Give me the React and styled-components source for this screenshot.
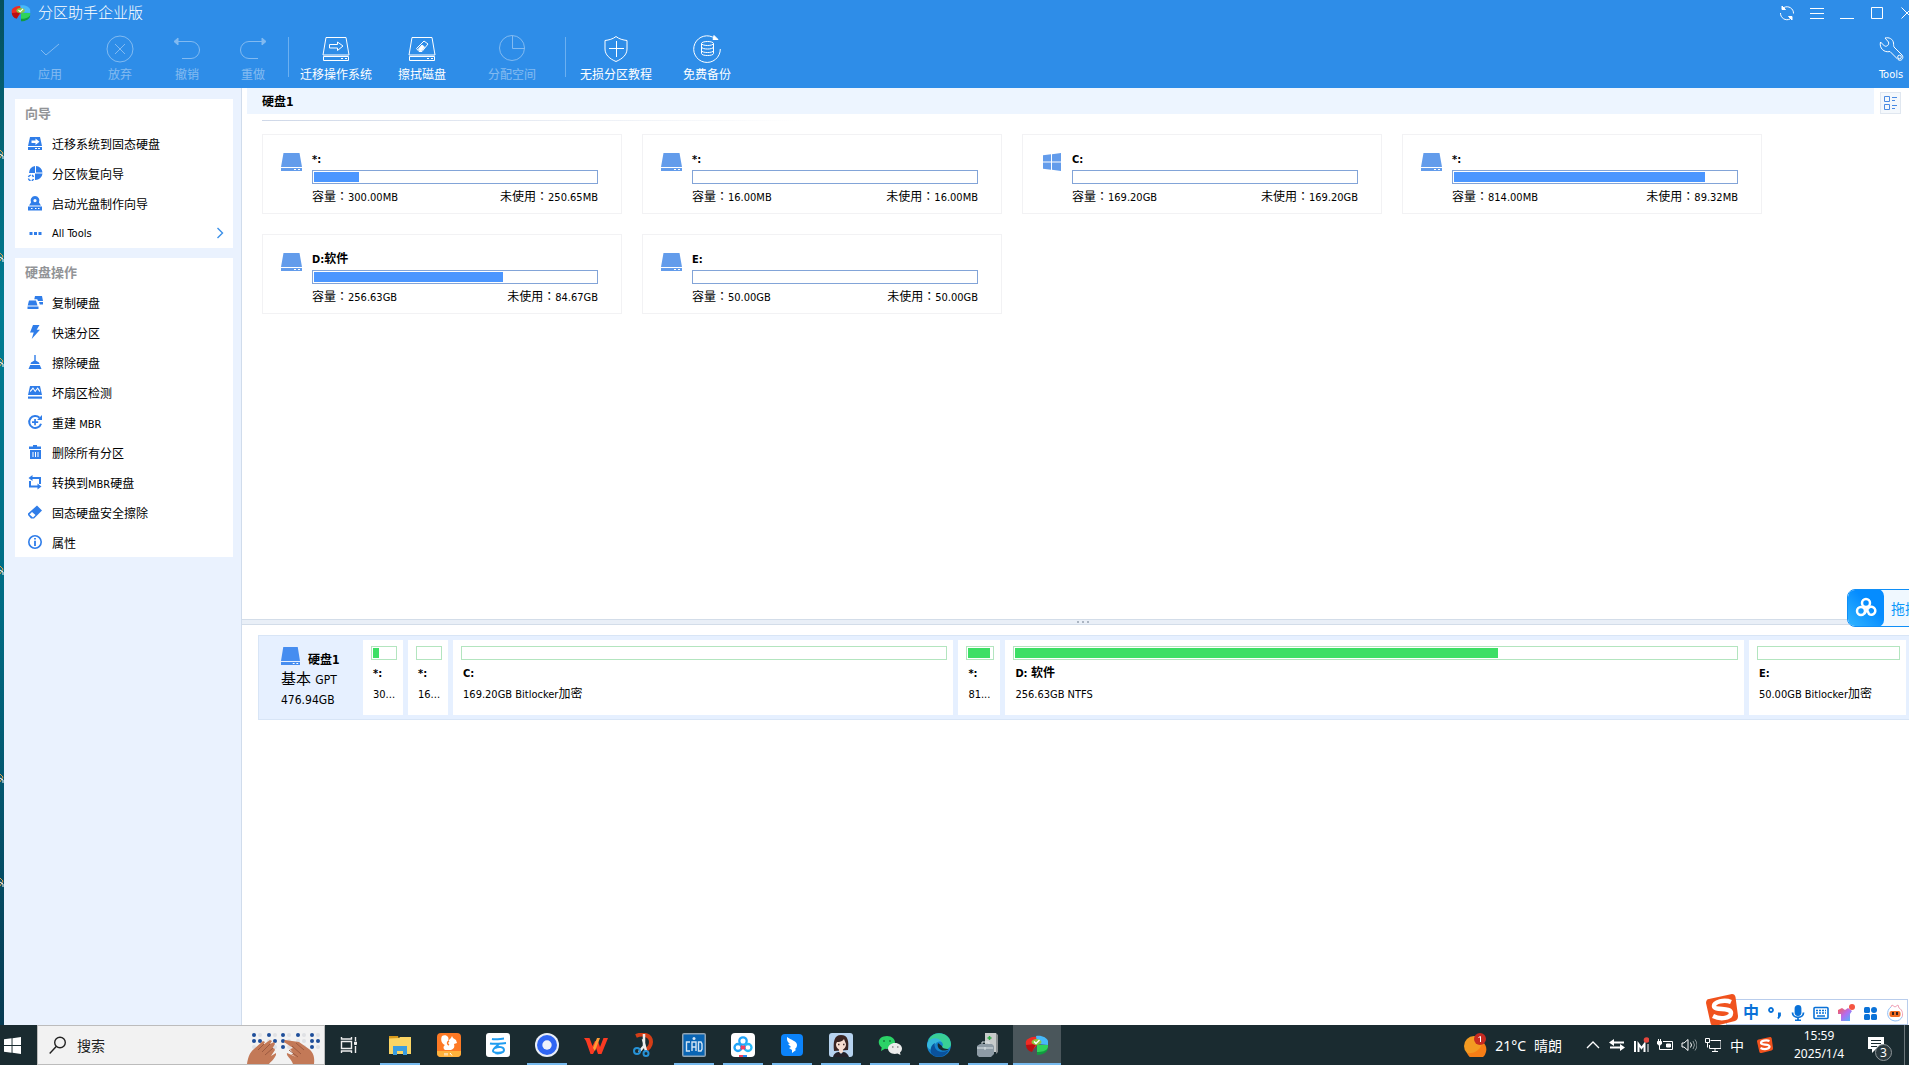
import React, { useState } from "react";
import styled, { createGlobalStyle } from "styled-components";

const GlobalStyle = createGlobalStyle`
  * {
    box-sizing: border-box;
    margin: 0;
    padding: 0;
  }
  body {
    overflow: hidden;
    background: #04566b;
    color: #000;
    font-size: 12px;
    font-family: "DejaVu Sans Condensed", "Noto Sans CJK SC", sans-serif;
  }
  button, input {
    font: inherit;
    color: inherit;
    border: none;
    background: none;
  }
  svg {
    display: block;
    flex: none;
  }
  ul {
    list-style: none;
  }
`;

const wizards = [
  { icon: "migrate", text: "迁移系统到固态硬盘" },
  { icon: "recover", text: "分区恢复向导" },
  { icon: "bootdisc", text: "启动光盘制作向导" },
  { icon: "dots", text: "All Tools", arrow: true },
];

const diskActions = [
  { icon: "copy", text: "复制硬盘" },
  { icon: "flash", text: "快速分区" },
  { icon: "broom", text: "擦除硬盘" },
  { icon: "sector", text: "坏扇区检测" },
  { icon: "rebuild", text: "重建 MBR" },
  { icon: "trash", text: "删除所有分区" },
  { icon: "convert", text: "转换到MBR硬盘" },
  { icon: "eraser", text: "固态硬盘安全擦除" },
  { icon: "info", text: "属性" },
];

const volumes = [
  { name: "*:", size: "300.00MB", free: "250.65MB", used: 16 },
  { name: "*:", size: "16.00MB", free: "16.00MB", used: 0 },
  { name: "C:", size: "169.20GB", free: "169.20GB", used: 0, system: true },
  { name: "*:", size: "814.00MB", free: "89.32MB", used: 89 },
  { name: "D:软件", size: "256.63GB", free: "84.67GB", used: 67 },
  { name: "E:", size: "50.00GB", free: "50.00GB", used: 0 },
];

const partitions = [
  { name: "*:", text: "300.00MB", used: 26, share: 40 },
  { name: "*:", text: "16.00MB", used: 0, share: 40 },
  { name: "C:", text: "169.20GB Bitlocker加密", used: 0, share: 500 },
  { name: "*:", text: "814.00MB", used: 90, share: 42 },
  { name: "D: 软件", text: "256.63GB NTFS", used: 67, share: 738 },
  { name: "E:", text: "50.00GB Bitlocker加密", used: 0, share: 157 },
];

// latin runs are set one pixel smaller than the chinese around them
const Mixed = ({ children }) =>
  children
    .split(/([\x20-\x7e]+)/)
    .filter(Boolean)
    .map((run, i) => (/^[\x20-\x7e]/.test(run) ? <Latin key={i}>{run}</Latin> : run));

const menuIcons = {
  migrate: (
    <>
      <path fill="#2f7de9" fillRule="evenodd" d="M3 2h10l2 9H1zM4.500 5.500v2.400h4v2L12.500 6.700 8.500 3.500v2z" />
      <path fill="#2f7de9" fillRule="evenodd" d="M1 12h14v3H1zm7 1v1h2v-1zm3 0v1h2v-1z" />
    </>
  ),
  recover: (
    <>
      <path fill="#2f7de9" d="M8 1v7H2a7 7 0 0 1 6-7zM9 1a7 7 0 0 1 6.500 6.500H9zM8 8.500h7.500A7 7 0 0 1 8 15z" />
      <path fill="none" stroke="#2f7de9" strokeWidth="1.400" strokeDasharray="3 1" d="M1.500 12a2.600 2.600 0 0 1 5 0M1.500 13.500a2.600 2.600 0 0 0 5 .5" />
    </>
  ),
  bootdisc: (
    <>
      <path fill="#2f7de9" fillRule="evenodd" d="M8 1a4.500 4.500 0 0 1 4 6.500l2 3H2l2-3A4.500 4.500 0 0 1 8 1zm0 3a1.600 1.600 0 1 0 0 3.200A1.600 1.600 0 0 0 8 4z" />
      <path fill="#2f7de9" fillRule="evenodd" d="M1 11.500h14v4H1zm3 1.500v1h1.500v-1zm4 0v1h1.500v-1zm3 0v1h1.500v-1z" />
    </>
  ),
  dots: <path fill="#2f7de9" d="M2.500 7h3v3h-3zM7 7h3v3H7zM11.500 7h3v3h-3z" />,
  copy: (
    <>
      <path fill="#2f7de9" d="M2 6.500h7l1.500 5H.7zM.5 12.500h11V15H.5z" />
      <path fill="#2f7de9" d="M8 2h7l1 5h-5l-.8-1.700H7.300zM12 8h4v2.500h-3.200z" />
    </>
  ),
  flash: <path fill="#2f7de9" d="M6 1h6.500L9.700 5.700H13L4.700 15l2-6.500H3z" />,
  broom: <path fill="#2f7de9" d="M7.300 1h1.400v5.500L12 8.500l.5 1.500h-9L4 8.500l3.300-2zM3.200 11h9.600l1.700 4H1.500z" />,
  sector: (
    <>
      <path fill="#2f7de9" fillRule="evenodd" d="M3 2h10l2 9H1zM3.500 8 6 5l2.200 3.200L10.500 5 12.500 8l.8-1-2.600-3.800-2.500 3.200L6 3.200 2.800 7z" />
      <path fill="#2f7de9" d="M1 12.500h14v2.200H1z" />
    </>
  ),
  rebuild: (
    <>
      <path fill="none" stroke="#2f7de9" strokeWidth="2" d="M12.500 3.700a6 6 0 1 0 1.500 6" />
      <path fill="#2f7de9" d="M15 1v5h-5zM7.200 5h1.700v2.200h2.300v1.700H8.900v2.300H7.200V8.900H5V7.200h2.200z" />
    </>
  ),
  trash: (
    <path fill="#2f7de9" fillRule="evenodd" d="M6 1h4v1.500h4V5H2V2.500h4zM3 6h11v9H3zm2.500 2v5h1V8zm2.500 0v5h1V8zm2.500 0v5h1V8z" />
  ),
  convert: (
    <>
      <path fill="none" stroke="#2f7de9" strokeWidth="2" d="M3 7v5.500h8M5 4h8v6" />
      <path fill="#2f7de9" d="M5.500 1v6L1.500 4zM10.500 9.500v6l4-3z" />
    </>
  ),
  eraser: (
    <path fill="#2f7de9" fillRule="evenodd" d="M10 1.500 15 6.500 7 14.500H4L1 11V9.500zM5 8 2.500 10.500 6 13.500 8.500 11z" />
  ),
  info: (
    <>
      <circle cx="8" cy="8" r="6.200" fill="none" stroke="#2f7de9" strokeWidth="1.600" />
      <path fill="#2f7de9" d="M7.100 4h1.800v1.600H7.100zM7.100 6.800h1.800V12H7.100z" />
    </>
  ),
};

const MenuIcon = ({ name }) => (
  <svg width="16" height="16" viewBox="0 0 16 16">
    {menuIcons[name]}
  </svg>
);

const toolIcons = {
  apply: <path d="m5 15 5 5L23 9" />,
  discard: (
    <>
      <circle cx="14" cy="14" r="13" />
      <path d="m9 9 10 10M19 9 9 19" />
    </>
  ),
  undo: (
    <>
      <path d="M3 6.500h15a8.500 8.500 0 0 1 0 17H9" />
      <path fill="#fff" d="M1 6.500 5 3v7z" />
    </>
  ),
  redo: (
    <>
      <path d="M25 6.500H10a8.500 8.500 0 0 0 0 17h9" />
      <path fill="#fff" d="M27 6.500 23 3v7z" />
    </>
  ),
  migrate: (
    <>
      <path d="M4 2.500h20L27 20H1zM1.500 21.500h25v4h-25zM19 23.500h2M23 23.500h2" />
      <path d="M7.500 9.500h8V7l5.500 4-5.500 4.500v-2.500h-8z" />
    </>
  ),
  wipe: (
    <>
      <path d="M4 2.500h20L27 20H1zM1.500 21.500h25v4h-25zM19 23.500h2M23 23.500h2" />
      <path d="m16 6 4 3-6 7.500H11l-2.500-3z" />
      <path fill="#fff" d="m14 10 2.500 2-3 3.500h-2L10.500 14z" />
    </>
  ),
  allocate: (
    <>
      <circle cx="14" cy="13" r="12.500" />
      <path d="M14.500 1v12.500H27" />
    </>
  ),
  guide: (
    <>
      <path d="M14 1.500C11 4 7 5 3 5.500V14c0 6 5 10 11 12.500C20 24 25 20 25 14V5.500C21 5 17 4 14 1.500z" />
      <path d="M14.500 6v16M7 13.500h15" />
    </>
  ),
  backup: (
    <>
      <path d="M22 3.500A13.300 13.300 0 1 0 27.300 14" />
      <path fill="#fff" d="m21 .5 4 4h-5z" />
      <ellipse cx="14.500" cy="8.500" rx="6" ry="2" />
      <path d="M8.500 8.500v10c0 2.700 12 2.700 12 0v-10M8.500 12c0 2.700 12 2.700 12 0M8.500 15.500c0 2.700 12 2.700 12 0" />
    </>
  ),
  tools: (
    <>
      <path d="M8 3c4-1 8 1 8.500 5 .2 2 0 3 .5 4l8 8c2.500 3-1 7-4 4.500l-8-8C7 18 2 13 3.500 7l4 4c2 1 5-1 4-4z" />
      <circle cx="22.500" cy="22" r="1.800" />
    </>
  ),
};

const Tool = ({ icon, label, width, disabled }) => (
  <ToolButton type="button" $width={width} disabled={disabled}>
    <svg width="28" height="28" viewBox="0 0 28 28" fill="none" stroke="#fff">
      {toolIcons[icon]}
    </svg>
    {label}
  </ToolButton>
);

const DriveIcon = ({ color = "#639ceb", size = 21 }) => (
  <svg width={size} height="18" viewBox="0 0 21 18" preserveAspectRatio="none">
    <path fill={color} d="M2.500 0h16L21 14H0zM0 15h21v3H0z" />
    <path fill="#fff" d="M13 16h2v1h-2zM17 16h2v1h-2z" />
  </svg>
);

const WindowsIcon = ({ color = "#639ceb", size = 18 }) => (
  <svg width={size} height={size} viewBox="0 0 18 18">
    <path fill={color} d="M0 2.300 8 1.300v7.200H0zM9 1.200 18 0v8.500H9zM0 9.500h8v7.200l-8-1zM9 9.500h9V18l-9-1.200z" />
  </svg>
);

const Sogou = ({ size }) => (
  <svg width={size} height={size} viewBox="0 0 32 32">
    <path fill="#f0521d" d="M3 5 26 0c2 0 3 1 3.500 3L32 22c0 3-1 4-3 5L9 32c-3 0-4-1-4.500-3L0 9c0-2 1-4 3-4z" />
    <path fill="none" stroke="#fff" strokeWidth="4.500" d="M25 8C18 5 8 8 8 12c0 5 17 1 17 7 0 5-10 7-18 3" />
  </svg>
);

const AomeiIcon = ({ size }) => (
  <svg width={size} height={size} viewBox="0 0 24 24">
    <path fill="#f02c24" d="M12 4v8l-5 6C2 17 0 12 1 8c2-3 7-5 11-4z" />
    <path fill="#b90f12" d="m1 12 10-1-4 8c-4-1-6-4-6-7z" />
    <path fill="#46b9fa" d="M11 3c6-1 11 2 12 5v4l-11-1z" />
    <path fill="#2fd35a" d="M23 12c1 5-5 9-11 9v-9z" />
    <path fill="#119c3f" d="M23 15c0 4-5 7-11 7v-3c5 0 9-1 11-4z" />
    <ellipse cx="11.500" cy="9" rx="5" ry="3" fill="#8dc63f" />
    <path fill="none" stroke="#fff" strokeWidth="1.400" d="m9 8.500 2 2L14.500 7" />
  </svg>
);

const appIcons = {
  explorer: (
    <>
      <path fill="#d79a1c" d="M1 3h9l1 3H1z" />
      <path fill="#fbd564" d="M1 5.500 11 5l1-1h11v17H1z" />
      <path fill="#3b9de0" d="M5 13h14v9h-4v-4H9v4H5z" />
    </>
  ),
  squirrel: (
    <>
      <rect width="24" height="24" rx="4" fill="#fd7924" />
      <path fill="#ffb23c" d="M0 18h24v2q0 4-4 4H4q-4 0-4-4z" />
      <path fill="#fff" d="M5 3c4-2 8 1 6 5l3-3 1-2 1 2 3 2 1 3-3 1c1 3 0 5-3 6H8c-2-1-2-4 0-5-3-1-5-5-3-9z" />
      <path stroke="#fd7924" strokeWidth="1.500" fill="none" d="M12 8c-2 1-2 3 0 4" />
      <path stroke="#fff" d="M8 20v2.500M10 20v2.500M13 20l2 2.500" />
    </>
  ),
  cloud: (
    <>
      <rect width="24" height="24" rx="3" fill="#fff" />
      <path fill="none" stroke="#209df0" strokeWidth="2" d="M6 6c4 1 7 0 12-.5M4 10.500c6 1 10 0 16-.5M13 11c-2 2-6 4-6 7 0 2 7 2 10 1M9 15c4-2 9-1 9 2s-6 4-9 3" />
    </>
  ),
  quark: (
    <>
      <circle cx="12" cy="12" r="12" fill="#e9eef7" />
      <circle cx="12" cy="12" r="10" fill="#2f66f5" />
      <circle cx="12" cy="12" r="4.700" fill="#eef2fa" />
    </>
  ),
  wps: (
    <>
      <path fill="#fb3a22" d="M0 5h5.500l3 8L11 8h3l2 6 3.500-9H24l-6.500 16H14l-2-6-3 6H6.500L2 8z" />
      <path fill="#ff9b35" d="M13 5h3l-5 13-2-3z" />
    </>
  ),
  snip: (
    <>
      <path fill="none" stroke="#d43e17" strokeWidth="4" d="M3 3c7-3 15-1 15 6 0 4-3 7-6 8" />
      <path stroke="#eee" strokeWidth="2.500" d="M11 1v12l-5 6M10 6l3 12" />
      <g fill="none" stroke="#2692d6" strokeWidth="2">
        <circle cx="4" cy="18" r="3" />
        <circle cx="13" cy="20.500" r="2.500" />
      </g>
    </>
  ),
  cad: (
    <>
      <rect width="24" height="24" rx="2" fill="#91a4b3" />
      <rect x="1.500" y="1.500" width="21" height="21" fill="#0965b4" />
      <path fill="none" stroke="#d3e5f4" strokeWidth="1.400" d="M8 9H4.500v9H8M10 18V9h4v9M10 14h4M16.500 9h2.500l1 2v5l-1 2h-2.500z" />
      <circle cx="12" cy="5.500" r="1.500" fill="#d3e5f4" />
    </>
  ),
  baidu: (
    <>
      <rect width="24" height="24" rx="4" fill="#fff" />
      <g fill="none" strokeWidth="2.300">
        <circle cx="12" cy="8" r="3.700" stroke="#20a5fa" />
        <circle cx="7" cy="14.500" r="3.500" stroke="#20a5fa" />
        <circle cx="17" cy="14.500" r="3.500" stroke="#26b8fa" />
        <path stroke="#f33e5f" d="m10 13 4 3M14 13l-4 3" />
      </g>
      <path fill="#f33e5f" d="M8 22h4v2H8z" />
      <path fill="#2788f5" d="M12 22h4v2h-4z" />
    </>
  ),
  dingtalk: (
    <>
      <rect x="1" y="1" width="22" height="22" rx="4" fill="#0b83fa" />
      <path fill="#fff" d="M7 4c4 3 10 4 10 8 0 2-1 3-2 4l1 1-4 3 0-3-3-2 2-1-3-3 2-.5C7 9 7 7 7 4z" />
    </>
  ),
  avatar: (
    <>
      <rect width="24" height="24" rx="3" fill="#b7d3ef" />
      <path fill="#3a2422" d="M5 18C4 9 5 2 12 2s8 6 7 15z" />
      <path fill="#f7ddd1" d="M8 9c5 0 6-2 7-3l2 5c0 4-3 6-5 6s-5-2-5-6zM10 15h4v5h-4z" />
      <path fill="#25222a" d="M4 24c1-4 4-5 6-5l2 2 2-2c3 0 5 2 6 5z" />
      <path stroke="#46302f" strokeWidth="1.400" d="M9 11.500h1.500M14 11.500h1.500" />
    </>
  ),
  wechat: (
    <>
      <path fill="#2bd367" d="M9 3c5 0 8 3 8 6.500S14 16 9 16l-2-.3L3 18l.7-3.500C-2 10 1 3 9 3z" />
      <path fill="#ececec" d="M17 10c4 0 7 2.500 7 5.500 0 2-1 3-2 4l.5 2.500-3-1.400C14 22 10 19 10 15.500c0-3 3-5.500 7-5.500z" />
      <path stroke="#18803e" strokeWidth="1.600" d="M5 8h2M11 8h2" />
      <path stroke="#8b8b8b" strokeWidth="1.400" d="M14 14h1.500M19 14h1.500" />
    </>
  ),
  edge: (
    <>
      <circle cx="12" cy="12" r="12" fill="#1583cf" />
      <path fill="#39cf96" d="M1 9C3-3 23-3 24 11c0 4-4 6-8 5-2-.5-1-2 0-4C16 7 6 4 1 9z" />
      <path fill="#36b7dc" d="M0 12C1 4 12 3 15 9c-5-2-9 3-8 8-4 0-7-2-7-5z" />
      <path fill="#0a529d" d="M8 10c-2 6 4 12 14 7-4 8-14 9-18 3-1-4 0-8 4-10z" />
      <path fill="#192a2e" d="M11 10c-2 6 5 10 11 6-5 0-7-1-7-3z" />
    </>
  ),
  server: (
    <>
      <path fill="#c7cbcb" d="M9 0h11v19H9z" />
      <path fill="#898f91" d="m20 0 2 2v17l-2 2z" />
      <path stroke="#2bab43" strokeWidth="1.500" d="M11.500 5h4M13.500 3v4" />
      <path fill="#8d9ba5" d="m1 13 3-2h12l2 2v8L15 24H3l-2-2z" />
      <path fill="none" stroke="#dde5e8" d="M6 11V9h7v2M1 15h16M9 14v3" />
    </>
  ),
};

const apps = [
  { name: "explorer", open: true },
  { name: "squirrel" },
  { name: "cloud" },
  { name: "quark", open: true },
  { name: "wps" },
  { name: "snip" },
  { name: "cad", open: true },
  { name: "baidu", open: true },
  { name: "dingtalk", open: true },
  { name: "avatar", open: true },
  { name: "wechat", open: true },
  { name: "edge", open: true },
  { name: "server", open: true },
];

const trayIcons = [
  <g key="sync">
    <path strokeWidth="2" d="M2 5.500h13M1 10.500h13" />
    <path fill="#fff" stroke="none" d="M5 2v7L0 5.500zM11 7v7l5-3.500z" />
  </g>,
  <g key="mm">
    <path strokeWidth="2" d="M2 4v11M5.500 15V7l3 4 3-4v8" />
    <circle cx="13.500" cy="3" r="2.800" fill="#e4463c" stroke="none" />
    <path d="M15 7v8" />
  </g>,
  <g key="battery">
    <path d="M6 4.500h9.500v8H4" />
    <path fill="#fff" d="M9.500 7h4v3h-4zM.5 4.500h4V7l-2 1.500-2-1.500z" />
    <path d="M1.500 2v2M3.500 2v2M2.500 8v4.500H5" />
  </g>,
  <g key="volume">
    <path d="M1 6v4h2l4 3.500V2.500L3 6zM9.500 5.500q2 2.500 0 5" />
    <path opacity="0.500" d="M12 4q3 4 0 8M14 2.500q4 5.500 0 11" />
  </g>,
  <path key="network" d="M5.500 3.500H16v8H4.500V8M7 14.500h6M10 11.500v3M.5 1.500h4v4h-4zM2.500 5.500v5" />,
];

const SideCard = ({ title, items }) => (
  <StyledSideCard>
    <h2>{title}</h2>
    <ul>
      {items.map((item) => (
        <li key={item.text}>
          <SideItem type="button">
            <MenuIcon name={item.icon} />
            <span>
              <Mixed>{item.text}</Mixed>
            </span>
            {item.arrow && (
              <svg width="8" height="12" viewBox="0 0 8 12" fill="none" stroke="#3c90e8" strokeWidth="1.400">
                <path d="m1.500 1 5 5-5 5" />
              </svg>
            )}
          </SideItem>
        </li>
      ))}
    </ul>
  </StyledSideCard>
);

const VolumeCard = ({ volume }) => (
  <StyledVolume>
    <VolumeIcon>{volume.system ? <WindowsIcon /> : <DriveIcon />}</VolumeIcon>
    <VolumeBody>
      <h3>
        <Mixed>{volume.name}</Mixed>
      </h3>
      <Bar $border="#82a4d8" $fill="#4b96ff">
        <div style={{ width: `${volume.used}%` }} />
      </Bar>
      <VolumeInfo>
        <span>
          <Mixed>{`容量：${volume.size}`}</Mixed>
        </span>
        <span>
          <Mixed>{`未使用：${volume.free}`}</Mixed>
        </span>
      </VolumeInfo>
    </VolumeBody>
  </StyledVolume>
);

const App = () => {
  const [search, setSearch] = useState("");

  return (
    <>
      <GlobalStyle />
      <Screen>
        <Desktop>
          <DesktopEdge>
            <svg width="4" height="900" viewBox="0 0 4 900" fill="none">
              {[154, 257, 362, 570, 778, 882].map((y) => (
                <g key={y}>
                  <path stroke="#e0a050" d={`M0 ${y - 4}l3 3-3 5`} />
                  <path stroke="#fff" d={`M0 ${y}l3 2v3`} />
                </g>
              ))}
            </svg>
          </DesktopEdge>
          <Window>
            <Header>
              <TitleBar>
                <AomeiIcon size={20} />
                <h1>分区助手企业版</h1>
                <WindowButtons>
                  <button type="button" aria-label="刷新">
                    <svg width="16" height="16" viewBox="0 0 16 16" fill="none" stroke="#fff">
                      <path d="M5 2.500a6.500 6.500 0 0 1 9.500 6M11 14a6.500 6.500 0 0 1-9.500-6" />
                      <path fill="#fff" d="M3 1v3.500h3.500zM13 15v-3.500H9.500z" />
                    </svg>
                  </button>
                  <button type="button" aria-label="菜单">
                    <svg width="14" height="14" viewBox="0 0 14 14" stroke="#fff">
                      <path d="M0 2.500h14M0 7.500h14M0 12.500h14" />
                    </svg>
                  </button>
                  <button type="button" aria-label="最小化">
                    <svg width="14" height="14" viewBox="0 0 14 14" stroke="#fff">
                      <path d="M0 12.500h14" />
                    </svg>
                  </button>
                  <button type="button" aria-label="最大化">
                    <svg width="14" height="14" viewBox="0 0 14 14" stroke="#fff" fill="none">
                      <path d="M1.500 1.500h11v11h-11z" />
                    </svg>
                  </button>
                  <button type="button" aria-label="关闭">
                    <svg width="12" height="12" viewBox="0 0 12 12" stroke="#fff">
                      <path d="m.5.5 11 11M11.500.5l-11 11" />
                    </svg>
                  </button>
                </WindowButtons>
              </TitleBar>
              <Toolbar>
                <Tool icon="apply" label="应用" width={72} disabled />
                <Tool icon="discard" label="放弃" width={68} disabled />
                <Tool icon="undo" label="撤销" width={66} disabled />
                <Tool icon="redo" label="重做" width={66} disabled />
                <Separator />
                <Tool icon="migrate" label="迁移操作系统" width={94} />
                <Tool icon="wipe" label="擦拭磁盘" width={78} />
                <Tool icon="allocate" label="分配空间" width={102} disabled />
                <Separator />
                <Tool icon="guide" label="无损分区教程" width={100} />
                <Tool icon="backup" label="免费备份" width={82} />
                <Spacer />
                <Tool icon="tools" label={<Latin>Tools</Latin>} width={36} />
              </Toolbar>
            </Header>
            <Body>
              <Sidebar>
                <SideCard title="向导" items={wizards} />
                <SideCard title="硬盘操作" items={diskActions} />
              </Sidebar>
              <Main>
                <DiskHeading>
                  <h2>硬盘1</h2>
                  <ViewButton type="button" aria-label="视图">
                    <svg width="14" height="14" viewBox="0 0 14 14" fill="none" stroke="#4a8ae2">
                      <path d="M.5.5h5v5h-5zM.5 8.500h5v5h-5zM8 1.500h5M8 4.500h3M8 9.500h5M8 12.500h3" />
                    </svg>
                  </ViewButton>
                </DiskHeading>
                <VolumeArea>
                  <Rule />
                  <VolumeGrid>
                    {volumes.map((volume, i) => (
                      <VolumeCard volume={volume} key={i} />
                    ))}
                  </VolumeGrid>
                </VolumeArea>
                <Splitter>
                  <i />
                  <i />
                  <i />
                </Splitter>
                <DiskMap>
                  <DiskRow>
                    <DiskLabel>
                      <div>
                        <DriveIcon color="#468df0" size={19} />
                        <h3>硬盘1</h3>
                      </div>
                      <p>
                        基本 <small>GPT</small>
                      </p>
                      <p>
                        <small>476.94GB</small>
                      </p>
                    </DiskLabel>
                    {partitions.map((part, i) => (
                      <Partition key={i}>
                        <Bar $border="#b3e5bf" $fill="#3cdf65">
                          <div style={{ width: `${part.used}%` }} />
                        </Bar>
                        <h4>
                          <Mixed>{part.name}</Mixed>
                        </h4>
                        <p>
                          {part.share < 50 ? <Latin>{part.text.slice(0, 2)}...</Latin> : <Mixed>{part.text}</Mixed>}
                        </p>
                      </Partition>
                    ))}
                  </DiskRow>
                </DiskMap>
              </Main>
            </Body>
          </Window>
          <DropBox type="button">
            <DropIcon>
              <svg width="22" height="22" viewBox="0 0 22 22" fill="none" stroke="#fff" strokeWidth="2.500">
                <circle cx="11" cy="6" r="4" />
                <circle cx="6" cy="14" r="4" />
                <path d="M11 10.500 14 17a4 4 0 1 0-1-5.500L9 17" />
              </svg>
            </DropIcon>
            <span>拖拽</span>
          </DropBox>
          <ImeBar>
            <ImeLogo>
              <Sogou size={32} />
            </ImeLogo>
            <ImeText>中</ImeText>
            <svg width="16" height="16" viewBox="0 0 16 16" fill="none" stroke="#0a72d8" strokeWidth="1.800">
              <circle cx="4" cy="5" r="2" />
              <path fill="#0a72d8" d="M11 8.500h2v2l-2 3" />
            </svg>
            <svg width="16" height="16" viewBox="0 0 16 16" fill="none" stroke="#0a72d8" strokeWidth="1.800">
              <rect x="5.500" y="1" width="5" height="9" rx="2.500" fill="#0a72d8" />
              <path d="M2.500 7.500c0 6.500 11 6.500 11 0M8 12v4M5 15.500h6" />
            </svg>
            <svg width="16" height="16" viewBox="0 0 16 16" fill="none" stroke="#0a72d8">
              <rect x="1" y="2.500" width="14" height="11" rx="1" strokeWidth="1.600" />
              <path strokeWidth="1.500" strokeDasharray="2 1" d="M3 5.500h10M3 8h10" />
              <path strokeWidth="1.500" d="M4 11h8" />
            </svg>
            <svg width="18" height="18" viewBox="0 0 18 18">
              <defs>
                <linearGradient id="shirt" x1="0" y1="0" x2="1" y2="1">
                  <stop offset="0" stopColor="#fc5b50" />
                  <stop offset="0.500" stopColor="#b36df0" />
                  <stop offset="1" stopColor="#3dc0fb" />
                </linearGradient>
              </defs>
              <path fill="url(#shirt)" d="m5 4 3 2 3-2 4 3-2 3v7H4v-7H1V6z" />
              <circle cx="15" cy="3" r="3" fill="#f55541" />
            </svg>
            <svg width="16" height="16" viewBox="0 0 16 16" fill="#0a72d8">
              <rect x="2" y="2" width="6" height="6" rx="1.500" />
              <circle cx="12" cy="5" r="3" />
              <rect x="2" y="9" width="6" height="6" rx="1.500" />
              <rect x="9" y="9" width="6" height="6" rx="1.500" />
            </svg>
            <svg width="18" height="18" viewBox="0 0 18 18">
              <path fill="#fff" stroke="#f0a2b8" d="M5 3 6 1l3 2 3-2 1 3c4 2 4 7 3 9" />
              <path fill="none" stroke="#8fbef5" d="M5 3C0 6 0 16 9 17c4 0 6-2 7-4" />
              <rect x="3.500" y="7" width="11" height="6" rx="2" fill="#f06b20" />
              <path fill="#3a211b" d="M6 8h2v3H6zM10 8h2v3h-2z" />
            </svg>
          </ImeBar>
        </Desktop>
        <Taskbar>
          <StartButton type="button" aria-label="开始">
            <WindowsIcon color="#fff" size={17} />
          </StartButton>
          <SearchBox>
            <svg width="18" height="18" viewBox="0 0 18 18" fill="none" stroke="#222" strokeWidth="1.400">
              <circle cx="11" cy="6.500" r="5.300" />
              <path d="m7.200 10.500-6.500 7" />
            </svg>
            <input aria-label="搜索" placeholder="搜索" value={search} onChange={(e) => setSearch(e.target.value)} />
            <svg width="76" height="38" viewBox="0 0 76 38">
              {[8, 23, 37, 52, 66].map((x, i) => (
                <g key={x} fill="#dfe1e4">
                  <circle cx={x} cy="9" r="2" fill="#1e4e9a" />
                  <circle cx={x + 6} cy="9" r="2" />
                  <circle cx={x} cy="15" r="2" fill={i % 2 ? "#dfe1e4" : "#1e4e9a"} />
                  <circle cx={x + 6} cy="15" r="2" fill={i < 2 || i > 3 ? "#1e4e9a" : "#dfe1e4"} />
                  <circle cx={x} cy="21" r="2" fill={i > 1 ? "#1e4e9a" : "#dfe1e4"} />
                  <circle cx={x + 6} cy="21" r="2" />
                </g>
              ))}
              <path fill="#c37957" d="M1 38c1-7 3-12 7-15l9-8 2 1-2 3 7-5 2 1-2 3 4-2 1 2-3 5 2-1 1 2-4 6 5-3v2c-3 6-5 6-7 9z" />
              <path fill="#c37957" d="M68 38c1-7-1-12-5-15l-10-7-14-2-1 2 9 6-3 1 4 5-3 0 5 3-9-4c-1 3 4 5 6 11z" />
              <path fill="none" stroke="#9c5a40" d="M18 18l-6 6M24 18l-8 8M27 22l-8 7M50 17l8 7M46 20l9 8M43 24l9 7" />
            </svg>
          </SearchBox>
          <TaskView type="button" aria-label="任务视图">
            <svg width="18" height="18" viewBox="0 0 18 18" fill="none" stroke="#eee">
              <path strokeWidth="1.400" d="M1.500 1v2h10V1M1.500 5.500h10v7h-10zM1.500 17v-2h10v2M15.500 1v4M15.500 10v7" />
              <path fill="#eee" d="M14.500 6h2v2.500h-2z" />
            </svg>
          </TaskView>
          {apps.map((app) => (
            <TaskButton type="button" aria-label={app.name} key={app.name} $open={app.open}>
              <svg width="24" height="24" viewBox="0 0 24 24" fill="none">
                {appIcons[app.name]}
              </svg>
            </TaskButton>
          ))}
          <TaskButton type="button" aria-label="分区助手" $open $active>
            <AomeiIcon size={24} />
          </TaskButton>
          <Spacer />
          <Weather type="button">
            <svg width="24" height="24" viewBox="0 0 24 24">
              <circle cx="11" cy="13" r="10" fill="#f39a22" />
              <path fill="#f77e16" d="M20 9a10 10 0 1 1-16 11c8 1 13-3 16-11z" />
              <circle cx="17" cy="6" r="6" fill="#c62a21" />
              <path fill="none" stroke="#fff" d="m15.500 4.500 2-1v5.500" />
            </svg>
            <span>21°C</span>
            <span>晴朗</span>
          </Weather>
          <Tray>
            <svg width="16" height="16" viewBox="0 0 16 16" fill="none" stroke="#fff" strokeWidth="1.300">
              <path d="m2 11 6-6 6 6" />
            </svg>
            {trayIcons.map((icon) => (
              <svg key={icon.key} width="16" height="16" viewBox="0 0 16 16" fill="none" stroke="#fff">
                {icon}
              </svg>
            ))}
            <span>中</span>
            <Sogou size={16} />
          </Tray>
          <Clock>
            <span>15:59</span>
            <span>2025/1/4</span>
          </Clock>
          <Notice type="button">
            <svg width="18" height="18" viewBox="0 0 18 18">
              <path fill="#fff" d="M1 1h16v12H9l-4 4v-4H1z" />
              <path stroke="#1b2b30" d="M4 4.500h10M4 7.500h10M4 10.500h6" />
            </svg>
            <NoticeCount>3</NoticeCount>
          </Notice>
        </Taskbar>
      </Screen>
    </>
  );
};

const Screen = styled.div`
  display: flex;
  flex-direction: column;
  min-height: 100vh;
`;
const Desktop = styled.div`
  position: relative;
  display: flex;
  flex: 1;
  overflow: hidden;
`;
const DesktopEdge = styled.div`
  width: 4px;
  overflow: hidden;
  background: linear-gradient(#05505f, #007c93 30%, #006b83 60%, #073a52);
`;
const Window = styled.div`
  display: flex;
  flex-direction: column;
  flex: 1;
  min-width: 0;
  background: #fff;
`;
const Latin = styled.span`
  font-size: 11px;
`;
const Spacer = styled.div`
  flex: 1;
`;

const Header = styled.header`
  height: 88px;
  overflow: hidden;
  background: #2e8de8;
  color: #fff;
`;
const TitleBar = styled.div`
  display: flex;
  align-items: center;
  height: 26px;
  padding-left: 7px;
  h1 {
    margin-left: 7px;
    font-size: 15px;
    font-weight: 300;
    line-height: 24px;
  }
`;
const WindowButtons = styled.div`
  display: flex;
  margin-left: auto;
  margin-right: -13px;
  button {
    display: flex;
    align-items: center;
    justify-content: center;
    width: 30px;
    height: 26px;
  }
`;
const Toolbar = styled.div`
  display: flex;
  height: 62px;
  padding-left: 10px;
`;
const ToolButton = styled.button`
  display: flex;
  flex-direction: column;
  align-items: center;
  gap: 3px;
  width: ${(props) => props.$width}px;
  padding-top: 9px;
  color: #fff;
  line-height: 18px;
  white-space: nowrap;
  opacity: ${(props) => (props.disabled ? 0.4 : 1)};
`;
const Separator = styled.div`
  width: 1px;
  height: 40px;
  margin: 11px 0 0 2px;
  background: #6bb0f1;
`;

const Body = styled.div`
  display: flex;
  flex: 1;
`;
const Sidebar = styled.aside`
  display: flex;
  flex-direction: column;
  gap: 10px;
  width: 238px;
  padding: 11px 8px 0 11px;
  border-right: 1px solid #d0dcec;
  background: #eaf2fe;
`;
const StyledSideCard = styled.section`
  background: #fff;
  h2 {
    padding-left: 10px;
    color: #929497;
    font-size: 13px;
    line-height: 29px;
  }
`;
const SideItem = styled.button`
  display: flex;
  align-items: center;
  gap: 9px;
  width: 100%;
  height: 30px;
  padding: 0 9px 0 12px;
  text-align: left;
  span {
    flex: none;
  }
  svg:last-child {
    margin-left: auto;
  }
`;

const Main = styled.main`
  display: flex;
  flex-direction: column;
  flex: 1;
  min-width: 0;
`;
const DiskHeading = styled.div`
  display: flex;
  align-items: flex-end;
  gap: 6px;
  padding: 0 8px 0 5px;
  h2 {
    flex: 1;
    padding: 2px 0 0 15px;
    background: #edf5ff;
    font-size: 12px;
    line-height: 24px;
  }
`;
const ViewButton = styled.button`
  display: flex;
  align-items: center;
  justify-content: center;
  width: 21px;
  height: 22px;
  border: 1px solid #e0e7f0;
  background: #f4f8fc;
`;
const VolumeArea = styled.div`
  height: 505px;
  padding: 6px 20px 0;
`;
const Rule = styled.div`
  width: 540px;
  height: 1px;
  background: linear-gradient(90deg, #cfd8e8, #fff);
`;
const VolumeGrid = styled.div`
  display: flex;
  flex-wrap: wrap;
  gap: 20px;
  margin-top: 13px;
`;
const StyledVolume = styled.article`
  display: flex;
  width: 360px;
  height: 80px;
  padding: 16px 23px 0 18px;
  border: 1px solid #f2f2f4;
`;
const VolumeIcon = styled.div`
  display: flex;
  justify-content: center;
  width: 21px;
  margin: 2px 10px 0 0;
`;
const VolumeBody = styled.div`
  flex: 1;
  h3 {
    height: 19px;
    font-size: 12px;
    line-height: 16px;
  }
`;
const Bar = styled.div`
  height: 14px;
  padding: 1px;
  border: 1px solid ${(props) => props.$border};
  background: #fff;
  div {
    height: 100%;
    background: ${(props) => props.$fill};
  }
`;
const VolumeInfo = styled.p`
  display: flex;
  justify-content: space-between;
  margin-top: 4px;
  font-family: "DejaVu Sans Condensed", "Noto Sans CJK TC", sans-serif;
  line-height: 18px;
`;

const Splitter = styled.div`
  display: flex;
  align-items: center;
  justify-content: center;
  gap: 3px;
  height: 6px;
  padding-left: 14px;
  border: solid #d3dde9;
  border-width: 1px 0;
  background: #e9eff7;
  i {
    width: 2px;
    height: 2px;
    background: #abb5c2;
  }
`;
const DiskMap = styled.div`
  padding: 10px 0 0 16px;
`;
const DiskRow = styled.div`
  display: grid;
  grid-template-columns: 99px ${partitions.map((part) => `minmax(0, ${part.share}fr)`).join(" ")};
  gap: 5px;
  padding: 4px 3px 4px 0;
  border: solid #d8e5f6;
  border-width: 1px 0 1px 1px;
  background: #e6f0ff;
`;
const DiskLabel = styled.div`
  padding: 7px 0 0 22px;
  white-space: nowrap;
  div {
    display: flex;
    gap: 8px;
    height: 23px;
  }
  h3 {
    padding-top: 4px;
    font-size: 12px;
    line-height: 18px;
  }
  p {
    font-size: 15px;
    line-height: 19px;
  }
  small {
    font-size: 12px;
  }
`;
const Partition = styled.div`
  height: 75px;
  padding: 6px 6px 0 8px;
  background: #fff;
  white-space: nowrap;
  h4, p {
    padding-left: 2px;
    font-size: 12px;
    line-height: 20px;
  }
  h4 {
    margin-top: 3px;
  }
`;

const DropBox = styled.button`
  position: absolute;
  top: 589px;
  right: -11px;
  display: flex;
  align-items: center;
  gap: 7px;
  height: 38px;
  border: 1px solid #108ff7;
  border-radius: 8px;
  background: #f0f8ff;
  color: #0b98fa;
  font-size: 14px;
  white-space: nowrap;
  overflow: hidden;
`;
const DropIcon = styled.div`
  display: flex;
  align-items: center;
  justify-content: center;
  width: 36px;
  height: 38px;
  border-radius: 7px;
  background: linear-gradient(45deg, #34b6ff, #058cff 60%);
`;
const ImeBar = styled.div`
  position: absolute;
  right: 1px;
  bottom: 0;
  display: flex;
  align-items: center;
  justify-content: space-between;
  width: 182px;
  height: 26px;
  padding: 1px 3px 0 16px;
  border: 1px solid #b9cdec;
  background: #fff;
`;
const ImeLogo = styled.div`
  position: absolute;
  left: -21px;
  bottom: -2px;
`;
const ImeText = styled.span`
  color: #0a72d8;
  font-size: 16px;
  font-weight: bold;
  line-height: 24px;
`;

const Taskbar = styled.footer`
  display: flex;
  height: 40px;
  padding-right: 4px;
  background: #1a2b30;
  color: #fff;
  font-family: "Noto Sans", "Noto Sans CJK SC", sans-serif;
`;
const StartButton = styled.button`
  display: flex;
  align-items: center;
  width: 37px;
  padding-left: 4px;
`;
const SearchBox = styled.div`
  display: flex;
  align-items: center;
  width: 288px;
  padding: 0 2px 0 11px;
  border: 1px solid #bcbcbc;
  background: #f2f2f2;
  input {
    flex: 1;
    min-width: 0;
    margin-left: 10px;
    color: #222;
    font-size: 14px;
    outline: none;
  }
  input::placeholder {
    color: #222;
    opacity: 1;
  }
`;
const TaskView = styled.button`
  display: flex;
  align-items: center;
  justify-content: center;
  width: 48px;
  margin-right: 3px;
`;
const TaskButton = styled.button`
  display: flex;
  align-items: center;
  justify-content: center;
  width: 48px;
  margin-right: 1px;
  background: ${(props) => (props.$active ? "#4a565b" : "none")};
  background-image: ${(props) => (props.$open ? "linear-gradient(#76b9ed, #76b9ed)" : "none")};
  background-size: ${(props) => (props.$active ? "48px" : "40px")} 2px;
  background-position: center bottom;
  background-repeat: no-repeat;
`;
const Weather = styled.button`
  display: flex;
  align-items: center;
  gap: 8px;
  margin-right: 23px;
  font-size: 14px;
`;
const Tray = styled.div`
  display: flex;
  align-items: center;
  gap: 8px;
  font-size: 14px;
  span {
    margin: 0 5px 0 1px;
  }
`;
const Clock = styled.time`
  display: flex;
  flex-direction: column;
  align-items: center;
  width: 92px;
  padding-top: 2px;
  line-height: 18px;
`;
const Notice = styled.button`
  position: relative;
  display: flex;
  align-items: center;
  width: 40px;
  padding-left: 2px;
  border-right: 1px solid #6b777b;
`;
const NoticeCount = styled.span`
  position: absolute;
  left: 10px;
  top: 19px;
  width: 17px;
  height: 17px;
  border: 1px solid #8f979a;
  border-radius: 50%;
  background: #2b393e;
  font-size: 12px;
  line-height: 15px;
`;

export default App;
